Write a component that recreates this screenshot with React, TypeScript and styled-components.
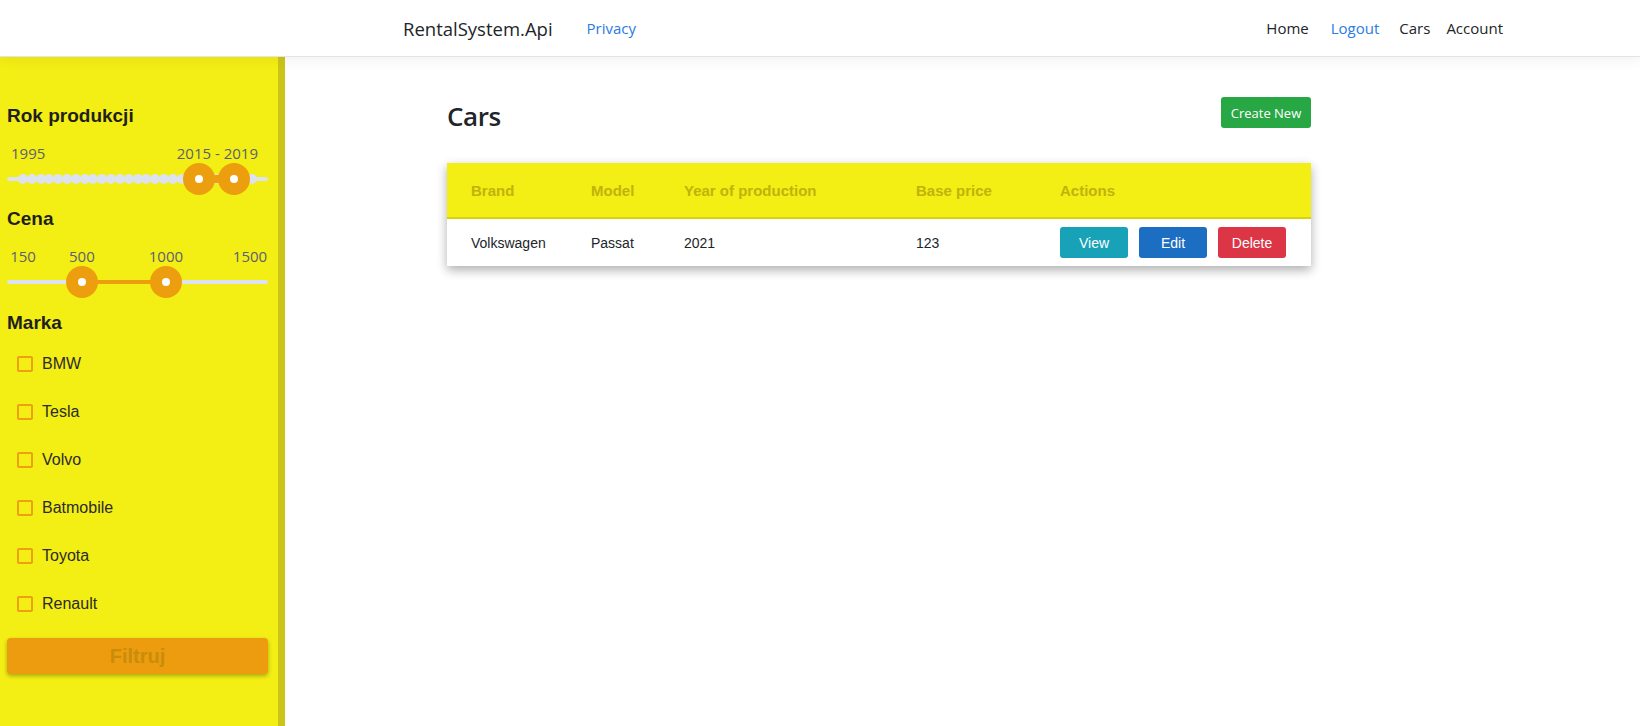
import React from "react";
import styled, { createGlobalStyle } from "styled-components";

const YELLOW = "#f3ee14";
const YELLOW_DARK = "#cbc519";
const ORANGE = "#ed9e0f";
const RAIL = "#dce2f0";

const GlobalStyle = createGlobalStyle`
  html, body { margin: 0; padding: 0; background: #fff; }
  body { font-family: "Liberation Sans", Arial, sans-serif; }
  * { box-sizing: border-box; }
`;

const Header = styled.header`
  position: relative;
  z-index: 2;
  height: 57px;
  background: #fff;
  border-bottom: 1px solid #e4e4e6;
  box-shadow: 0 4px 12px rgba(0, 0, 0, 0.05);
  display: flex;
  align-items: center;
  padding: 0 137px 0 403px;
  font-family: "Open Sans", "Noto Sans", sans-serif;
`;

const Brand = styled.a`
  font-size: 18.5px;
  color: #212529;
  text-decoration: none;
  white-space: nowrap;
`;

const NavLink = styled.a<{ $blue?: boolean; $ml?: number }>`
  font-size: 15px;
  color: ${(p) => (p.$blue ? "#2b7be2" : "#212529")};
  text-decoration: none;
  margin-left: ${(p) => p.$ml ?? 0}px;
  white-space: nowrap;
`;

const RightNav = styled.nav`
  margin-left: auto;
  display: flex;
  align-items: center;
`;

const Layout = styled.div`
  display: flex;
  min-height: calc(100vh - 57px);
`;

const Sidebar = styled.aside`
  width: 285px;
  flex-shrink: 0;
  background: ${YELLOW};
  border-right: 7px solid ${YELLOW_DARK};
  padding: 48px 10px 0 7px;
  display: flex;
  flex-direction: column;
`;

const SectionTitle = styled.h3<{ $mt?: number }>`
  margin: ${(p) => p.$mt ?? 0}px 0 0 0;
  font-size: 19px;
  line-height: 22px;
  font-weight: 700;
  color: #1f1f1f;
`;

const LabelsRow = styled.div<{ $mt?: number }>`
  margin-top: ${(p) => p.$mt ?? 0}px;
  position: relative;
  height: 22px;
  display: flex;
  justify-content: space-between;
  align-items: center;
  padding: 0 10px 0 4px;
  font-family: "Open Sans", "Noto Sans", sans-serif;
  font-size: 15px;
  color: #5d6070;
`;

const ValueLabel = styled.span`
  position: absolute;
  top: 0;
  line-height: 22px;
  transform: translateX(-50%);
`;

const Track = styled.div<{ $mt?: number }>`
  position: relative;
  height: 32px;
  margin-top: ${(p) => p.$mt ?? 0}px;
`;

const Rail = styled.div`
  position: absolute;
  left: 0;
  right: 0;
  top: 14px;
  height: 4px;
  border-radius: 2px;
  background: ${RAIL};
`;

const Dot = styled.span`
  position: absolute;
  top: 11px;
  width: 10px;
  height: 10px;
  margin-left: -5px;
  border-radius: 50%;
  background: ${RAIL};
`;

const Fill = styled.div<{ $h: number }>`
  position: absolute;
  top: ${(p) => 16 - p.$h / 2}px;
  height: ${(p) => p.$h}px;
  background: ${ORANGE};
`;

const Thumb = styled.span`
  position: absolute;
  top: 0;
  width: 32px;
  height: 32px;
  margin-left: -16px;
  border-radius: 50%;
  background: ${ORANGE};
  display: flex;
  align-items: center;
  justify-content: center;
  &::after {
    content: "";
    width: 8px;
    height: 8px;
    border-radius: 50%;
    background: #fff;
  }
`;

const CheckList = styled.div`
  margin-top: 6px;
  display: flex;
  flex-direction: column;
`;

const CheckRow = styled.label`
  display: flex;
  align-items: center;
  height: 48px;
  padding-left: 10px;
  font-size: 16px;
  color: #2b2b2b;
`;

const Box = styled.span`
  width: 16px;
  height: 16px;
  border: 2px solid #eea10f;
  border-radius: 2px;
  margin-right: 9px;
`;

const FilterButton = styled.button`
  margin-top: 10px;
  height: 36px;
  width: 100%;
  border: none;
  border-radius: 4px;
  background: #ec9c0e;
  box-shadow: 0 2px 4px rgba(0, 0, 0, 0.3);
  font-family: "Liberation Sans", Arial, sans-serif;
  font-size: 20px;
  font-weight: 700;
  color: #c98c0b;
`;

const Main = styled.main`
  flex: 1;
  padding: 40px 0 0 162px;
`;

const Content = styled.div`
  width: 864px;
`;

const TitleRow = styled.div`
  display: flex;
  justify-content: space-between;
  align-items: flex-start;
  height: 31px;
`;

const Title = styled.h1`
  margin: 2px 0 0 0;
  line-height: 34px;
  font-family: "Open Sans", "Noto Sans", sans-serif;
  font-size: 26px;
  font-weight: 600;
  letter-spacing: -0.4px;
  color: #212529;
`;

const CreateButton = styled.button`
  height: 31px;
  width: 90px;
  border: none;
  border-radius: 3px;
  background: #28a745;
  color: #fff;
  font-family: "Open Sans", "Noto Sans", sans-serif;
  font-size: 13px;
  padding: 0;
`;

const Table = styled.table`
  margin-top: 35px;
  width: 864px;
  border-collapse: collapse;
  table-layout: fixed;
  box-shadow: 0 4px 10px rgba(0, 0, 0, 0.32);
  background: #fff;
`;

const HeadRow = styled.tr`
  background: ${YELLOW};
  height: 55px;
  border-bottom: 2px solid #d9d00f;
`;

const Th = styled.th<{ $w?: number; $pl?: number }>`
  width: ${(p) => (p.$w ? `${p.$w}px` : "auto")};
  padding: 0 0 0 ${(p) => p.$pl ?? 0}px;
  text-align: left;
  font-size: 15px;
  font-weight: 700;
  color: #c2b20b;
`;

const BodyRow = styled.tr`
  height: 48px;
`;

const Td = styled.td<{ $pl?: number }>`
  padding: 0 0 0 ${(p) => p.$pl ?? 0}px;
  font-size: 14px;
  color: #212529;
`;

const Actions = styled.div`
  display: flex;
  gap: 11px;
`;

const ActionButton = styled.button<{ $bg: string }>`
  width: 68px;
  height: 31px;
  border: none;
  border-radius: 3px;
  background: ${(p) => p.$bg};
  color: #fff;
  font-family: "Liberation Sans", Arial, sans-serif;
  font-size: 14px;
  padding: 0;
`;

const brands = ["BMW", "Tesla", "Volvo", "Batmobile", "Toyota", "Renault"];

const YEAR_MIN = 1995;
const YEAR_MAX = 2021;
const yearX = (y: number) => 16 + ((y - YEAR_MIN) / (YEAR_MAX - YEAR_MIN)) * 229;
const years = Array.from({ length: YEAR_MAX - YEAR_MIN + 1 }, (_, i) => YEAR_MIN + i);
const priceX = (v: number) => 16 + ((v - 150) / 1350) * 227;

export default function App() {
  const y1 = yearX(2015);
  const y2 = yearX(2019);
  const p1 = priceX(500);
  const p2 = priceX(1000);
  return (
    <>
      <GlobalStyle />
      <Header>
        <Brand>RentalSystem.Api</Brand>
        <NavLink $blue $ml={34}>Privacy</NavLink>
        <RightNav>
          <NavLink>Home</NavLink>
          <NavLink $blue $ml={22}>Logout</NavLink>
          <NavLink $ml={20}>Cars</NavLink>
          <NavLink $ml={16}>Account</NavLink>
        </RightNav>
      </Header>
      <Layout>
        <Sidebar>
          <SectionTitle>Rok produkcji</SectionTitle>
          <LabelsRow $mt={15}>
            <span>1995</span>
            <span>2015 - 2019</span>
          </LabelsRow>
          <Track $mt={-1}>
            <Rail />
            {years.map((y) => (
              <Dot key={y} style={{ left: yearX(y) }} />
            ))}
            <Fill $h={8} style={{ left: y1, width: y2 - y1 }} />
            <Thumb style={{ left: y1 }} />
            <Thumb style={{ left: y2 }} />
          </Track>
          <SectionTitle $mt={13}>Cena</SectionTitle>
          <LabelsRow $mt={15}>
            {[150, 500, 1000, 1500].map((v) => (
              <ValueLabel key={v} style={{ left: priceX(v) }}>
                {v}
              </ValueLabel>
            ))}
          </LabelsRow>
          <Track $mt={-1}>
            <Rail />
            <Fill $h={4} style={{ left: p1, width: p2 - p1 }} />
            <Thumb style={{ left: p1 }} />
            <Thumb style={{ left: p2 }} />
          </Track>
          <SectionTitle $mt={14}>Marka</SectionTitle>
          <CheckList>
            {brands.map((b) => (
              <CheckRow key={b}>
                <Box />
                {b}
              </CheckRow>
            ))}
          </CheckList>
          <FilterButton>Filtruj</FilterButton>
        </Sidebar>
        <Main>
          <Content>
            <TitleRow>
              <Title>Cars</Title>
              <CreateButton>Create New</CreateButton>
            </TitleRow>
            <Table>
              <thead>
                <HeadRow>
                  <Th $w={144} $pl={24}>Brand</Th>
                  <Th $w={93}>Model</Th>
                  <Th $w={232}>Year of production</Th>
                  <Th $w={144}>Base price</Th>
                  <Th>Actions</Th>
                </HeadRow>
              </thead>
              <tbody>
                <BodyRow>
                  <Td $pl={24}>Volkswagen</Td>
                  <Td>Passat</Td>
                  <Td>2021</Td>
                  <Td>123</Td>
                  <Td>
                    <Actions>
                      <ActionButton $bg="#17a2b8">View</ActionButton>
                      <ActionButton $bg="#1b6ec2">Edit</ActionButton>
                      <ActionButton $bg="#dc3545">Delete</ActionButton>
                    </Actions>
                  </Td>
                </BodyRow>
              </tbody>
            </Table>
          </Content>
        </Main>
      </Layout>
    </>
  );
}
